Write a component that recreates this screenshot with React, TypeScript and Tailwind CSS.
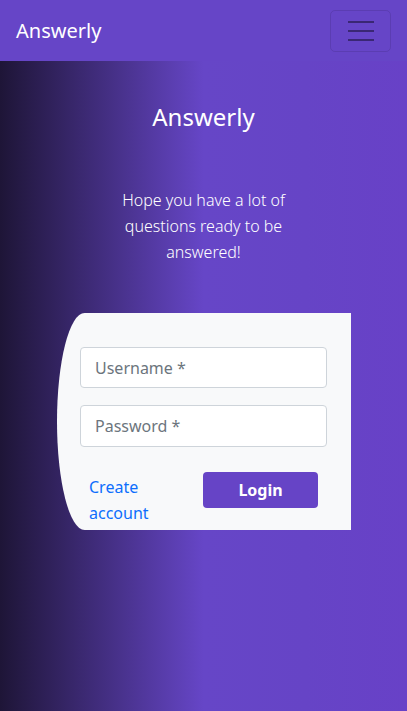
import React from "react";

const App = () => {
  return (
    <div
      className="min-h-[711px] w-full flex flex-col bg-[linear-gradient(to_right,#1e1537_0%,#6646c7_50%,#6644c6_75%,#6841c7_100%)]"
      style={{ fontFamily: '"Noto Sans", "Open Sans", sans-serif' }}
    >
      {/* Navbar */}
      <nav className="h-[61px] bg-[#6645c7] flex items-center justify-between pl-4 pr-4">
        <span className="text-white text-[20px] leading-none">Answerly</span>
        <button className="w-[61px] h-[42px] border border-black/10 rounded-[5px] flex flex-col items-center justify-center gap-[7px]">
          <span className="block w-[26px] h-[2px] bg-[#3a2774]" />
          <span className="block w-[26px] h-[2px] bg-[#3a2774]" />
          <span className="block w-[26px] h-[2px] bg-[#3a2774]" />
        </button>
      </nav>

      {/* Hero */}
      <div className="flex flex-col items-center text-white">
        <h1 className="mt-[40px] text-[24px] leading-[32px] font-normal">Answerly</h1>
        <p className="mt-[54px] w-[200px] text-center text-[16px] leading-[26px] font-light">
          Hope you have a lot of questions ready to be answered!
        </p>
      </div>

      {/* Login card */}
      <div className="mt-[48px] ml-[57px] w-[294px] bg-[#f8f9fa] rounded-l-[28px_110px] pt-[34px] pb-[4px] pl-[23px] pr-[24px]">
        <input
          placeholder="Username *"
          className="w-full h-[41px] px-[14px] bg-white border border-[#ced4da] rounded-[4px] text-[16px] text-[#212529] placeholder:text-[#6c757d] outline-none"
        />
        <input
          type="password"
          placeholder="Password *"
          className="mt-[17px] w-full h-[42px] px-[14px] bg-white border border-[#ced4da] rounded-[4px] text-[16px] text-[#212529] placeholder:text-[#6c757d] outline-none"
        />
        <div className="mt-[25px] flex items-start">
          <a href="#" className="w-[123px] pl-[9px] pr-[20px] pt-[2px] text-[16px] leading-[26px] text-[#0d6efd]">
            Create account
          </a>
          <button className="w-[115px] h-[36px] bg-[#6644c6] text-white font-bold text-[16px] rounded-[4px]">
            Login
          </button>
        </div>
      </div>
    </div>
  );
};

export default App;
